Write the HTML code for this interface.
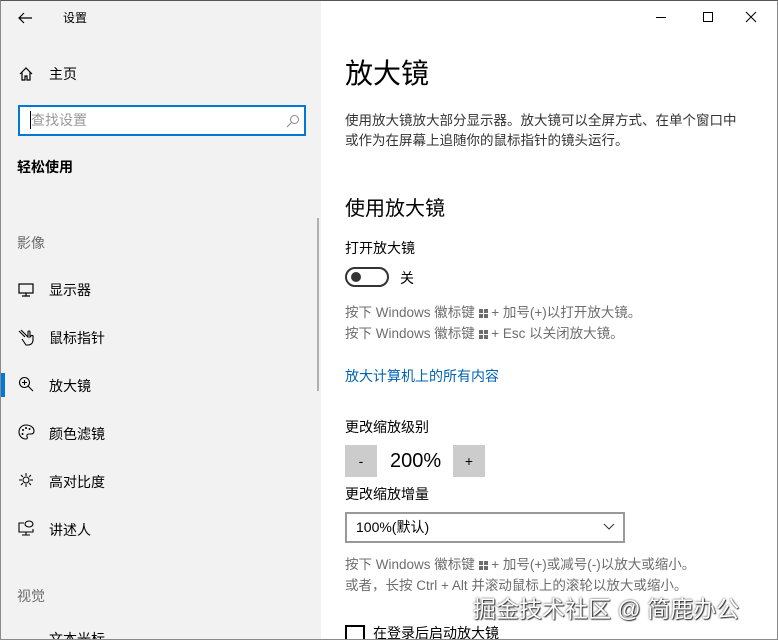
<!DOCTYPE html>
<html><head><meta charset="utf-8"><style>
*{margin:0;padding:0;box-sizing:border-box}
html,body{width:778px;height:640px;overflow:hidden}
body{background:#fff;font-family:"Liberation Sans","Noto Sans CJK SC",sans-serif;color:#000;position:relative}
.win{position:absolute;left:0;top:0;width:778px;height:640px;border:1px solid #8a8a8a;border-top:1px solid #555}
.left{position:absolute;left:1px;top:1px;width:320px;height:638px;background:#f2f2f2;overflow:hidden}
.a{position:absolute;white-space:nowrap}
.nav{position:absolute;left:48px;font-size:14px;color:#000}
.ico{position:absolute;left:17px}
.g{color:#6d6d6d}
.btn{position:absolute;width:32px;height:32px;background:#ccc;font-size:14px;text-align:center;line-height:32px}
.wk{display:inline-block;width:9px;height:9px;vertical-align:-1px;background:
linear-gradient(#6d6d6d,#6d6d6d) 0 0/4px 4px no-repeat,
linear-gradient(#6d6d6d,#6d6d6d) 5px 0/4px 4px no-repeat,
linear-gradient(#6d6d6d,#6d6d6d) 0 5px/4px 4px no-repeat,
linear-gradient(#6d6d6d,#6d6d6d) 5px 5px/4px 4px no-repeat}
</style></head><body>
<div class="left">
<svg class="a" style="left:16px;top:9px" width="16" height="16" viewBox="0 0 16 16"><path d="M15 8H2M7 3L2 8l5 5" fill="none" stroke="#000" stroke-width="1.2"/></svg>
<div class="a" style="left:62px;top:8px;font-size:12px">设置</div>
<svg class="a" style="left:17px;top:65px" width="16" height="16" viewBox="0 0 16 16"><path d="M2 8L8 2l6 6M4 6.5V14h3v-4h2v4h3V6.5" fill="none" stroke="#000" stroke-width="1.2"/></svg>
<div class="nav" style="top:63px">主页</div>
<div class="a" style="left:17px;top:104px;width:288px;height:31px;border:2px solid #0078d7;background:#fff">
<div class="a" style="left:10px;top:4px;width:1px;height:18px;background:#000"></div>
<div class="a" style="left:11px;top:3px;font-size:14px;color:#999">查找设置</div>
<svg class="a" style="left:266px;top:7px" width="14" height="14" viewBox="0 0 14 14"><circle cx="8.5" cy="5.5" r="4" fill="none" stroke="#888"/><path d="M5.5 8.5L1 13" stroke="#888"/></svg>
</div>
<div class="a" style="left:16px;top:156px;font-size:14px;font-weight:bold">轻松使用</div>
<div class="a g" style="left:16px;top:232px;font-size:14px">影像</div>
<svg class="ico" style="top:281px" width="18" height="16" viewBox="0 0 18 16"><rect x="1" y="2" width="14" height="9" fill="none" stroke="#000" stroke-width="1.2"/><path d="M8 11v3M4 14h8" stroke="#000" stroke-width="1.2"/></svg>
<div class="nav" style="top:279px">显示器</div>
<svg class="ico" style="top:327px" width="18" height="18" viewBox="0 0 18 18"><path d="M1 3l6 6M3 2l7 7V4a1 1 0 012 0v5l1-1a1 1 0 012 1v3c0 3-2 5-5 5H8L4 11" fill="none" stroke="#000" stroke-width="1.1"/></svg>
<div class="nav" style="top:327px">鼠标指针</div>
<div class="a" style="left:0;top:372px;width:4px;height:24px;background:#0078d7"></div>
<svg class="ico" style="top:375px" width="18" height="18" viewBox="0 0 18 18"><circle cx="6.5" cy="6.5" r="5" fill="none" stroke="#000" stroke-width="1.1"/><path d="M10 10l5 5M6.5 4v5M4 6.5h5" stroke="#000" stroke-width="1.1"/></svg>
<div class="nav" style="top:375px">放大镜</div>
<svg class="ico" style="top:423px" width="18" height="18" viewBox="0 0 18 18"><path d="M8 1C4 1 1 4 1 8s3 7 7 7c1.5 0 1.5-1.5 1-2.5S9 10 11 10h2c2 0 3-1 3-3C16 3.5 12.5 1 8 1z" fill="none" stroke="#000" stroke-width="1.1"/><circle cx="5" cy="6" r="1"/><circle cx="8" cy="4" r="1"/><circle cx="11.5" cy="5" r="1"/><circle cx="4.5" cy="10" r="1"/></svg>
<div class="nav" style="top:423px">颜色滤镜</div>
<svg class="ico" style="top:471px" width="18" height="18" viewBox="0 0 18 18"><circle cx="8" cy="8" r="3" fill="none" stroke="#000"/><path d="M8 1v3M8 12v3M1 8h3M12 8h3M3 3l2 2M11 11l2 2M13 3l-2 2M5 11l-2 2" stroke="#000"/></svg>
<div class="nav" style="top:471px">高对比度</div>
<svg class="ico" style="top:519px" width="18" height="18" viewBox="0 0 18 18"><path d="M6 3H1v9h14V9M8 12v3M4 15h8" fill="none" stroke="#000" stroke-width="1.1"/><ellipse cx="11" cy="4" rx="4" ry="3" fill="none" stroke="#000" stroke-width="1.1"/></svg>
<div class="nav" style="top:519px">讲述人</div>
<div class="a g" style="left:16px;top:585px;font-size:14px">视觉</div>
<div class="nav" style="top:628px">文本光标</div>
<div class="a" style="left:316px;top:217px;width:2px;height:173px;background:#b0b0b0"></div>
</div>
<div class="a" style="left:656px;top:17px;width:10px;height:1px;background:#000"></div>
<div class="a" style="left:703px;top:12px;width:10px;height:10px;border:1px solid #000"></div>
<svg class="a" style="left:745px;top:11px" width="12" height="12" viewBox="0 0 12 12"><path d="M1 1l10 10M11 1L1 11" stroke="#000"/></svg>
<div class="a" style="left:345px;top:52px;font-size:28px">放大镜</div>
<div class="a" style="left:345px;top:111px;font-size:13.5px;color:#333;line-height:20px">使用放大镜放大部分显示器。放大镜可以全屏方式、在单个窗口中<br>或作为在屏幕上追随你的鼠标指针的镜头运行。</div>
<div class="a" style="left:345px;top:192px;font-size:20px">使用放大镜</div>
<div class="a" style="left:345px;top:238px;font-size:14px">打开放大镜</div>
<div class="a" style="left:345px;top:267px;width:44px;height:20px;border:2px solid #333;border-radius:10px"><div class="a" style="left:4px;top:3px;width:10px;height:10px;border-radius:5px;background:#333"></div></div>
<div class="a" style="left:400px;top:268px;font-size:14px">关</div>
<div class="a g" style="left:345px;top:302px;font-size:13.5px;line-height:21px">按下 Windows 徽标键 <span class="wk"></span> + 加号(+)以打开放大镜。<br>按下 Windows 徽标键 <span class="wk"></span> + Esc 以关闭放大镜。</div>
<div class="a" style="left:345px;top:366px;font-size:14px;color:#0063b1">放大计算机上的所有内容</div>
<div class="a" style="left:345px;top:417px;font-size:14px">更改缩放级别</div>
<div class="btn" style="left:345px;top:445px">-</div>
<div class="a" style="left:390px;top:450px;font-size:20px">200%</div>
<div class="btn" style="left:453px;top:445px">+</div>
<div class="a" style="left:345px;top:484px;font-size:14px">更改缩放增量</div>
<div class="a" style="left:345px;top:512px;width:280px;height:31px;border:2px solid #999"><div class="a" style="left:9px;top:3px;font-size:14px">100%(默认)</div>
<svg class="a" style="left:256px;top:9px" width="12" height="8" viewBox="0 0 12 8"><path d="M1 1l5 5 5-5" fill="none" stroke="#333"/></svg></div>
<div class="a g" style="left:345px;top:554px;font-size:13.5px;line-height:21px">按下 Windows 徽标键 <span class="wk"></span> + 加号(+)或减号(-)以放大或缩小。<br>或者，长按 Ctrl + Alt 并滚动鼠标上的滚轮以放大或缩小。</div>
<div class="a" style="left:473px;top:590px;font-size:23px;color:#fff;text-shadow:0 0 2px #333,1px 1px 1px #333">掘金技术社区 @ 简鹿办公</div>
<div class="a" style="left:345px;top:625px;width:20px;height:20px;border:2px solid #000"></div>
<div class="a" style="left:373px;top:623px;font-size:14px">在登录后启动放大镜</div>
<div class="win"></div>
</body></html>
